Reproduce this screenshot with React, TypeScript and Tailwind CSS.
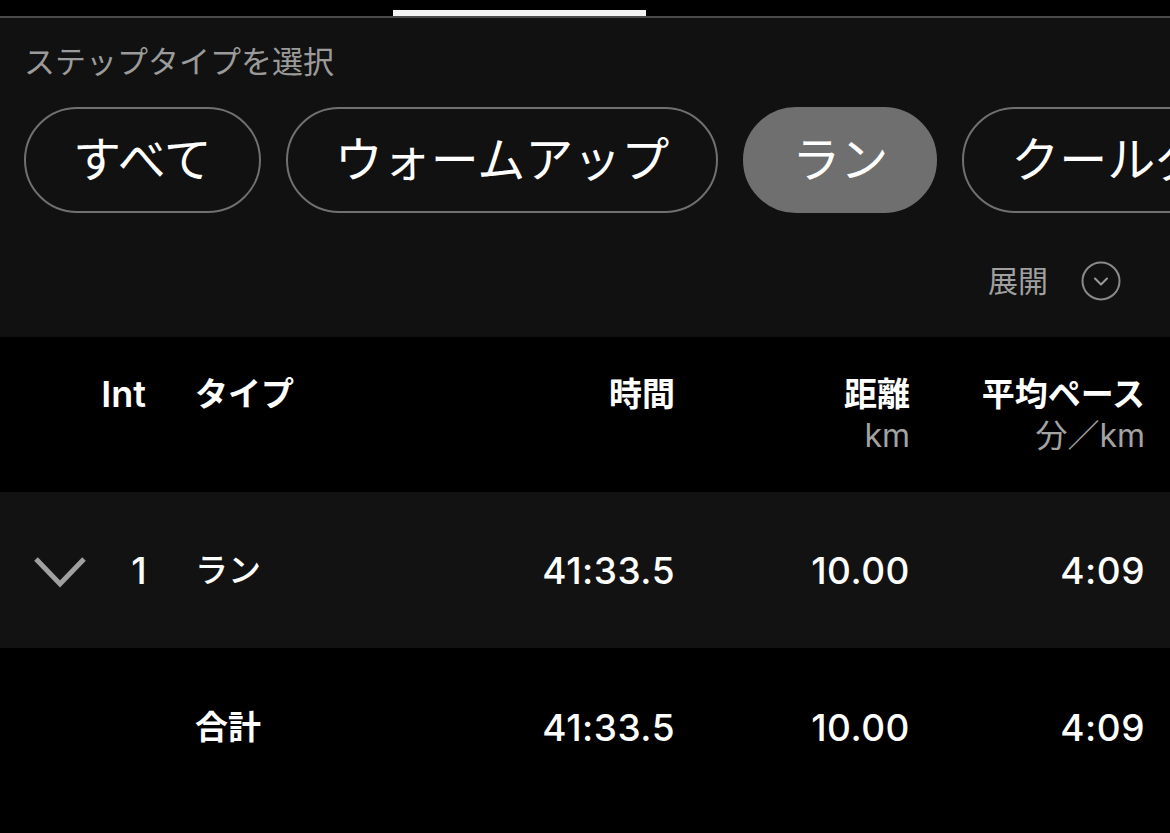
import React from "react";

const jp = "font-['Inter','Noto_Sans_CJK_JP',sans-serif]";

function Pill({ label, active = false }: { label: string; active?: boolean }) {
  return (
    <div
      className={
        "shrink-0 h-[106px] rounded-full flex items-center justify-center px-[47px] text-[48px] text-white whitespace-nowrap " +
        (active ? "bg-[#6f6f6f] border-[2.5px] border-[#6f6f6f]" : "border-[2.5px] border-[#707070]")
      }
    >
      {label}
    </div>
  );
}

function RowChevron() {
  return (
    <svg width="54" height="32" viewBox="0 0 54 32" fill="none">
      <path d="M3 3 L27 28 L51 3" stroke="#a0a0a0" strokeWidth="5" strokeLinecap="butt" strokeLinejoin="miter" />
    </svg>
  );
}

function CircleChevron() {
  return (
    <svg width="40" height="40" viewBox="0 0 40 40" fill="none">
      <circle cx="20" cy="20" r="18.5" stroke="#8a8a8a" strokeWidth="2" />
      <path d="M14 17.5 L20 23.5 L26 17.5" stroke="#9a9a9a" strokeWidth="2" strokeLinecap="round" strokeLinejoin="round" />
    </svg>
  );
}

export default function App() {
  return (
    <div className={"w-[1170px] h-[833px] overflow-hidden bg-black text-white " + jp}>
      {/* top strip with tab indicator */}
      <div className="h-[16px] bg-black pt-[10px]">
        <div className="ml-[393px] w-[253px] h-[6px] bg-[#f2f2f2]" />
      </div>
      <div className="h-[2px] bg-[#4a4a4a]" />

      {/* step type selector */}
      <div className="h-[319px] bg-[#111111] pt-[24px]">
        <div className="pl-[24px] text-[31px] leading-[40px] text-[#9b9b9b]">ステップタイプを選択</div>
        <div className="mt-[25px] flex gap-[25px] pl-[24px]">
          <Pill label="すべて" />
          <Pill label="ウォームアップ" />
          <Pill label="ラン" active />
          <Pill label="クールダウン" />
        </div>
        <div className="mt-[48px] flex items-center justify-end pr-[49px] gap-[33px]">
          <span className="text-[30px] leading-[40px] text-[#a0a0a0]">展開</span>
          <CircleChevron />
        </div>
      </div>

      {/* table header */}
      <div className="h-[155px] bg-black flex items-start pt-[35px] pr-[25px] text-[33px] font-semibold leading-[44px]">
        <div className="w-[100px]" />
        <div className="w-[46px] text-right text-[36px]">Int</div>
        <div className="w-[49px]" />
        <div className="flex-1">タイプ</div>
        <div className="w-[195px] text-right">時間</div>
        <div className="w-[235px] text-right flex flex-col items-end">
          <span>距離</span>
          <span className="text-[32px] font-normal leading-[40px] text-[#a3a3a3]">km</span>
        </div>
        <div className="w-[235px] text-right flex flex-col items-end">
          <span>平均ペース</span>
          <span className="text-[32px] font-normal leading-[40px] text-[#a3a3a3]">分／km</span>
        </div>
      </div>

      {/* interval row */}
      <div className="h-[156px] bg-[#121212] flex items-center pr-[25px] text-[37px] tracking-[0.5px] font-medium pt-[2px]">
        <div className="w-[100px] pl-[33px] flex items-center pt-[2px]">
          <RowChevron />
        </div>
        <div className="w-[47px] text-right">1</div>
        <div className="w-[48px]" />
        <div className="flex-1 text-[33px] tracking-normal">ラン</div>
        <div className="w-[195px] text-right">41:33.5</div>
        <div className="w-[235px] text-right">10.00</div>
        <div className="w-[235px] text-right">4:09</div>
      </div>

      {/* total row */}
      <div className="h-[160px] bg-black flex items-center pr-[25px] text-[37px] tracking-[0.5px] font-medium">
        <div className="w-[195px]" />
        <div className="flex-1 text-[33px] tracking-normal font-semibold">合計</div>
        <div className="w-[195px] text-right">41:33.5</div>
        <div className="w-[235px] text-right">10.00</div>
        <div className="w-[235px] text-right">4:09</div>
      </div>
    </div>
  );
}
